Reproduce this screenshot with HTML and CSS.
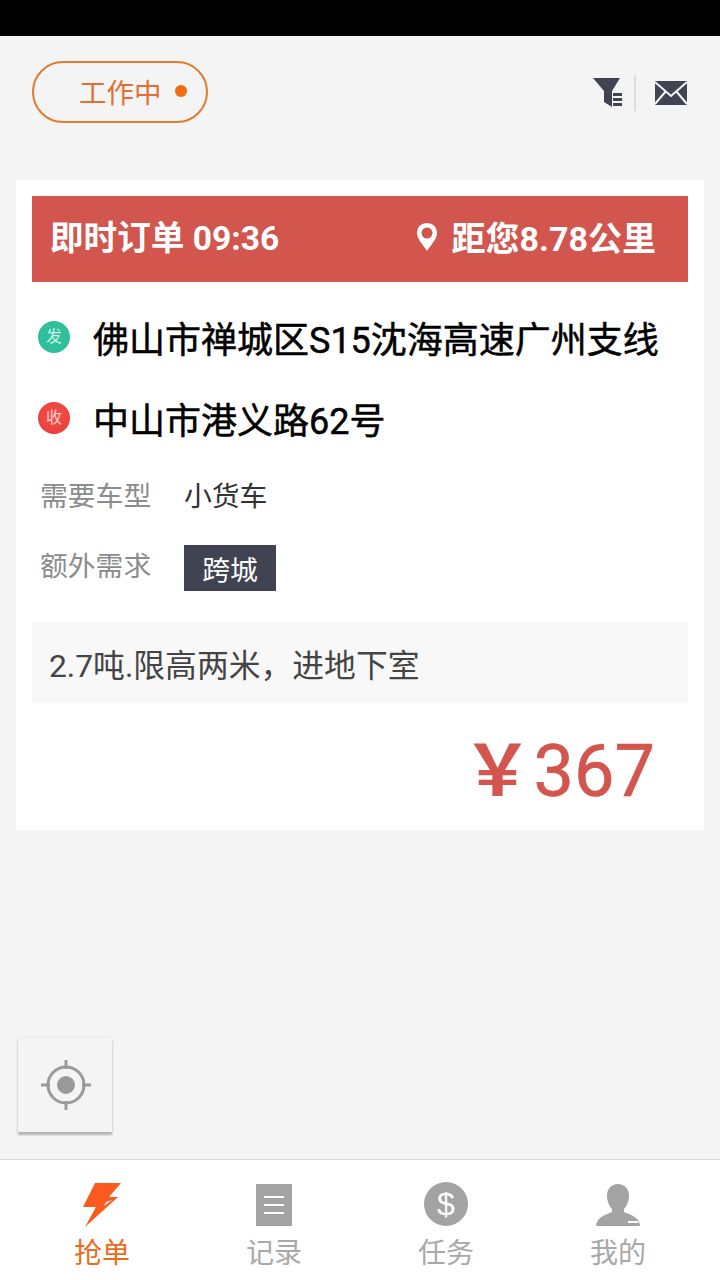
FILE: index.html
```html
<!DOCTYPE html>
<html lang="zh-CN">
<head>
<meta charset="utf-8">
<title>抢单</title>
<link rel="stylesheet" href="styles.css">
</head>
<body>
<div class="statusbar"></div>
<main class="main">
  <header class="topbar">
    <div class="status-pill"><span>工作中</span><i class="status-dot"></i></div>
    <div class="top-icons">
      <svg class="ic-filter" width="31" height="32" viewBox="0 0 31 32"><path d="M0 1H27L19 14V30L11 25V14Z" fill="#3f4352"/><path d="M19 14H31V31H19Z" fill="#f4f4f4"/><path d="M20 16H29V19H20ZM20 21H29V24H20ZM20 26H29V29H20Z" fill="#3f4352"/></svg>
      <i class="top-sep"></i>
      <svg class="ic-mail" width="34" height="26" viewBox="0 0 34 26"><path d="M1 1H33V25H1Z" fill="#3f4352"/><path d="M1 2L17 16L33 2M1 24L12 11M33 24L22 11" fill="none" stroke="#f4f4f4" stroke-width="2"/></svg>
    </div>
  </header>

  <section class="card">
    <div class="card-head">
      <span class="head-time">即时订单 09:36</span>
      <span class="head-dist">
        <svg class="ic-pin" width="22" height="30" viewBox="0 0 22 30"><path fill-rule="evenodd" d="M11 1C5.200 1 1 5.300 1 11C1 17.500 8 24 11 29C14 24 21 17.500 21 11C21 5.300 16.800 1 11 1ZM11 5.500A5.500 5.500 0 1 1 11 16.500A5.500 5.500 0 1 1 11 5.500Z" fill="#fff"/></svg>
        <span>距您8.78公里</span>
      </span>
    </div>

    <div class="addr addr-from"><i class="badge badge-from">发</i><span>佛山市禅城区S15沈海高速广州支线</span></div>
    <div class="addr addr-to"><i class="badge badge-to">收</i><span>中山市港义路62号</span></div>

    <div class="meta meta-car"><span class="meta-label">需要车型</span><span class="meta-value">小货车</span></div>
    <div class="meta meta-extra"><span class="meta-label">额外需求</span><span class="tag">跨城</span></div>

    <div class="note">2.7吨.限高两米，进地下室</div>
    <div class="price"><span class="yen">￥</span><span class="amount">367</span></div>
  </section>

  <button class="locate" type="button" aria-label="定位">
    <svg width="52" height="52" viewBox="0 0 52 52"><circle cx="26" cy="26" r="18" fill="none" stroke="#9a9a9a" stroke-width="3"/><circle cx="26" cy="26" r="9" fill="#9a9a9a"/><path d="M26 1V10M26 42V51M1 26H10M42 26H51" stroke="#9a9a9a" stroke-width="3"/></svg>
  </button>
</main>

<nav class="tabbar">
  <div class="tab tab-active">
    <svg class="ic-bolt" width="40" height="46" viewBox="0 0 40 46"><path d="M13 1H39L27 15H36L3 45L14 25H1Z" fill="#fb5a1e"/><path d="M22 24L30 18L24 20Z" fill="#fff"/></svg>
    <span>抢单</span>
  </div>
  <div class="tab">
    <svg width="44" height="44" viewBox="0 0 44 44"><path d="M4 2H40V44H4Z" fill="#a3a3a3"/><path d="M12 15H32M12 23H32M12 31H32" stroke="#fff" stroke-width="2"/></svg>
    <span>记录</span>
  </div>
  <div class="tab">
    <svg width="44" height="44" viewBox="0 0 44 44"><circle cx="22" cy="22" r="22" fill="#a3a3a3"/><text x="22" y="33" text-anchor="middle" class="dollar">$</text></svg>
    <span>任务</span>
  </div>
  <div class="tab">
    <svg width="44" height="44" viewBox="0 0 44 44"><path d="M22 2C29 2 33 7 33 14C33 20 30 25 28 27V30C34 33 42 34 44 43C44 44 43 44 42 44H2C1 44 0 44 0 43C2 34 10 33 16 30V27C14 25 11 20 11 14C11 7 15 2 22 2Z" fill="#a3a3a3"/><path d="M32 39H42V41H32Z" fill="#fff"/></svg>
    <span>我的</span>
  </div>
</nav>
</body>
</html>
```

FILE: styles.css
```css
* { box-sizing: border-box; }
html, body { margin: 0; padding: 0; }
body {
  width: 720px;
  height: 1280px;
  display: flex;
  flex-direction: column;
  background: #f4f4f4;
  font-family: "Noto Sans CJK SC", "Noto Sans", sans-serif;
  overflow: hidden;
}
i { font-style: normal; display: block; }
svg { display: block; }

.statusbar { height: 36px; background: #000; flex: none; }

.main {
  flex: 1;
  display: flex;
  flex-direction: column;
  padding: 0 16px;
  min-height: 0;
}

.topbar {
  height: 144px;
  flex: none;
  display: flex;
  justify-content: space-between;
  align-items: flex-start;
  padding: 25px 16px 0 16px;
}
.status-pill {
  width: 176px;
  height: 62px;
  border: 2px solid #e27a30;
  border-radius: 31px;
  display: flex;
  align-items: center;
  padding-left: 45px;
  color: #e26f32;
  font-size: 27.500px;
  line-height: 1;
}
.status-dot {
  width: 12px;
  height: 12px;
  border-radius: 50%;
  background: #f26a12;
  margin-left: 13px;
  margin-top: -2px;
}
.top-icons {
  display: flex;
  align-items: center;
  padding-top: 14px;
}
.top-sep { width: 2px; height: 36px; background: #dcdcdc; margin: 0 18px 0 10px; }

.card {
  background: #fff;
  height: 650px;
  padding: 16px 16px 0;
  flex: none;
}
.card-head {
  height: 86px;
  background: #d2554e;
  color: #fff;
  font-weight: 700;
  font-size: 33.600px;
  line-height: 86px;
  display: flex;
  align-items: flex-start;
  justify-content: space-between;
  padding: 0 32px 0 18px;
  font-family: Roboto, "Noto Sans CJK SC", sans-serif;
}
.head-dist {
  display: flex;
  align-items: center;
  gap: 14px;
  font-size: 34px;
}
.ic-pin { margin-top: -4px; }

.addr {
  display: flex;
  align-items: center;
  color: #000;
  font-size: 36px;
  font-weight: 400;
  -webkit-text-stroke: 0.5px #000;
  font-family: Roboto, "Noto Sans CJK SC", sans-serif;
  line-height: 48px;
}
.addr-from { margin-top: 35px; }
.addr-to { margin-top: 33px; }
.badge {
  width: 32px;
  height: 32px;
  border-radius: 50%;
  margin: -8px 23px 0 6px;
  flex: none;
  color: rgba(255,255,255,.75);
  -webkit-text-stroke: 0;
  font-size: 16px;
  font-weight: 400;
  line-height: 32px;
  text-align: center;
}
.badge-from { background: #2fc09b; }
.badge-to { background: radial-gradient(circle at 50% 40%, #f0504a, #ec3a36); }

.meta {
  display: flex;
  align-items: flex-start;
  font-size: 27.800px;
  line-height: 40px;
}
.meta-car { margin-top: 28px; }
.meta-extra { margin-top: 30px; }
.meta-label { width: 152px; padding-left: 8px; color: #8c8c8c; flex: none; }
.meta-value { color: #333; }
.tag {
  width: 92px;
  height: 46px;
  margin-top: 1px;
  background: #3f4352;
  color: #fff;
  text-align: center;
  line-height: 46px;
}

.note {
  margin-top: 31px;
  height: 81px;
  background: #f8f8f8;
  color: #444;
  font-size: 31.800px;
  line-height: 81px;
  padding: 4px 0 0 17px;
  font-family: Roboto, "Noto Sans CJK SC", sans-serif;
}

.price {
  display: flex;
  justify-content: flex-end;
  align-items: center;
  padding: 48px 33px 0 0;
  color: #d2554e;
  font-family: Roboto, sans-serif;
  line-height: 90px;
  height: 90px;
}
.yen { font-size: 70px; font-family: "Noto Sans CJK SC", sans-serif; font-weight: 700; margin: -12px 1px 0 0; }
.amount { font-size: 72px; font-weight: 400; -webkit-text-stroke: 0.6px #d2554e; }

.locate {
  width: 94px;
  height: 94px;
  margin: 208px 0 0 2px;
  padding: 0 0 0 2px;
  flex: none;
  background: #f4f4f4;
  border: 0;
  box-shadow: 0 3px 2px #b5b5b5, 0 0 3px #e2e2e2;
  display: flex;
  align-items: center;
  justify-content: center;
}

.tabbar {
  height: 121px;
  flex: none;
  background: #fff;
  border-top: 1px solid #d9d9d9;
  display: flex;
  padding-left: 16px;
}
.tab {
  width: 172px;
  display: flex;
  flex-direction: column;
  align-items: center;
  padding-top: 22px;
  color: #a8a8a8;
  font-size: 28px;
  line-height: 40px;
}
.tab svg { margin-bottom: 5px; }
.tab svg.ic-bolt { margin-bottom: 3px; }
.tab-active { color: #ee6a1c; }
.dollar { font-family: "Liberation Sans", sans-serif; font-size: 32px; fill: #fff; }
```
